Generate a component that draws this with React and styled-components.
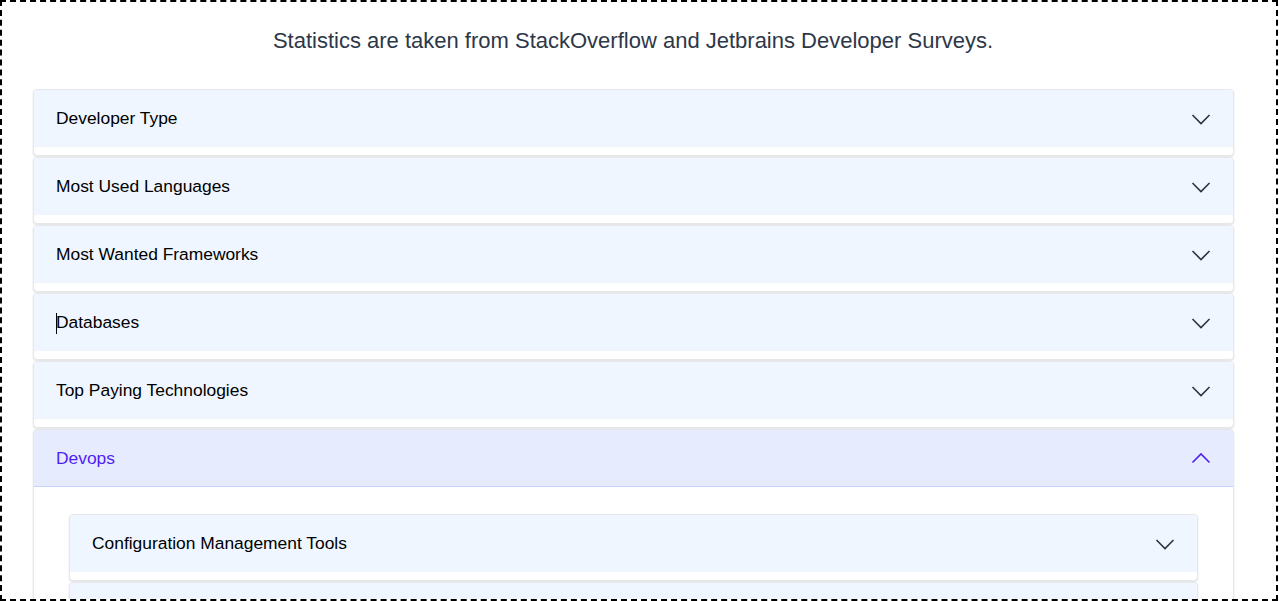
import React, { useState } from "react";
import styled, { createGlobalStyle } from "styled-components";

const Global = createGlobalStyle`
  html, body { margin: 0; padding: 0; background: #fff; }
  body { font-family: "Liberation Sans", Arial, sans-serif; overflow: hidden; }
  * { box-sizing: border-box; }
`;

const Frame = styled.div`
  width: 1278px;
  height: 601px;
  border: 2px dashed #000;
  overflow: hidden;
  padding: 0 0 0 31px;
`;

const Title = styled.h2`
  margin: 0;
  padding: 26px 0 35px;
  width: 1200px;
  text-align: center;
  font-size: 22px;
  font-weight: 400;
  line-height: 26px;
  color: #2d3748;
`;

const List = styled.div`
  display: flex;
  flex-direction: column;
  gap: 1px;
  width: ${(p) => (p.$outer ? "1201px" : "auto")};
`;

const Card = styled.div`
  background: #fff;
  border: 1px solid #e5e7eb;
  border-radius: 4px;
  box-shadow: 0 1px 2px rgba(0, 0, 0, 0.12);
  padding-bottom: ${(p) => (p.$open ? "0" : "8px")};
  overflow: hidden;
`;

const Header = styled.button`
  width: 100%;
  height: 57px;
  display: flex;
  align-items: center;
  justify-content: space-between;
  padding: 0 22px;
  border: none;
  border-bottom: ${(p) => (p.$open ? "1px solid #c7d2fe" : "none")};
  background: ${(p) => (p.$open ? "#e6ebfe" : "#eff6ff")};
  color: ${(p) => (p.$open ? "#4f1ff5" : "#000")};
  font-family: inherit;
  font-size: 17.4px;
  text-align: left;
  cursor: pointer;
`;

const Label = styled.span`
  position: relative;
`;

const Caret = styled.span`
  position: absolute;
  left: 0;
  top: 1px;
  bottom: -1px;
  border-left: 1px solid #000;
`;

const Body = styled.div`
  padding: 27px 35px 0;
`;

const Chevron = ({ up, color }) => (
  <svg width="20" height="20" viewBox="0 0 20 20" fill="none">
    <path
      d={up ? "M1.5 14.5 L10 6 L18.5 14.5" : "M1.5 6 L10 14.5 L18.5 6"}
      stroke={color}
      strokeWidth="1.6"
    />
  </svg>
);

function Item({ title, open, caret, children }) {
  const [isOpen, setOpen] = useState(open);
  return (
    <Card $open={isOpen}>
      <Header $open={isOpen} onClick={() => setOpen(!isOpen)}>
        <Label>
          {caret && <Caret />}
          {title}
        </Label>
        <Chevron up={isOpen} color={isOpen ? "#4f1ff5" : "#2f3340"} />
      </Header>
      {isOpen && <Body>{children}</Body>}
    </Card>
  );
}

export default function App() {
  return (
    <>
      <Global />
      <Frame>
        <Title>Statistics are taken from StackOverflow and Jetbrains Developer Surveys.</Title>
        <List $outer>
          <Item title="Developer Type" />
          <Item title="Most Used Languages" />
          <Item title="Most Wanted Frameworks" />
          <Item title="Databases" caret />
          <Item title="Top Paying Technologies" />
          <Item title="Devops" open>
            <List>
              <Item title="Configuration Management Tools" />
              <Item title="Containerization Tools" />
              <Item title="CI/CD Tools" />
            </List>
          </Item>
        </List>
      </Frame>
    </>
  );
}
